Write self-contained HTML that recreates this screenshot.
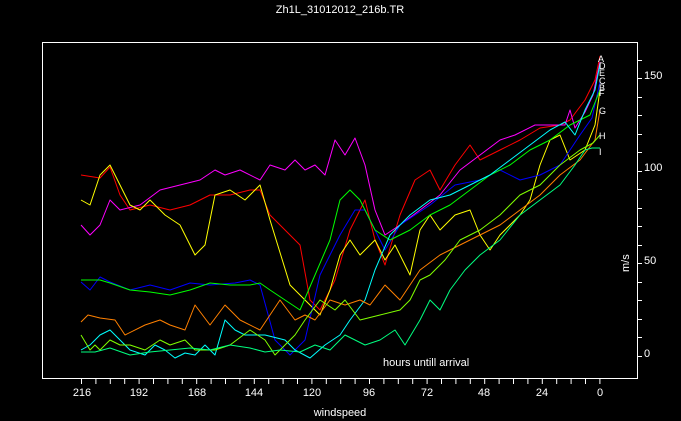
<!DOCTYPE html>
<html><head><meta charset="utf-8"><style>
html,body{margin:0;padding:0;background:#000;width:681px;height:421px;overflow:hidden}
svg{display:block}
text{font-family:"Liberation Sans",sans-serif;fill:#fff}
</style></head><body>
<svg width="681" height="421" viewBox="0 0 681 421" xmlns="http://www.w3.org/2000/svg">
<text x="340" y="13" font-size="11" text-anchor="middle">Zh1L_31012012_216b.TR</text>
<rect x="42.5" y="42.5" width="595" height="336" fill="none" stroke="#fff" stroke-width="1"/>
<g stroke="#fff" stroke-width="1">
<line x1="638" y1="60.5" x2="642" y2="60.5"/><line x1="638" y1="78.5" x2="642" y2="78.5"/><line x1="638" y1="97.5" x2="642" y2="97.5"/><line x1="638" y1="115.5" x2="642" y2="115.5"/><line x1="638" y1="134.5" x2="642" y2="134.5"/><line x1="638" y1="152.5" x2="642" y2="152.5"/><line x1="638" y1="171.5" x2="642" y2="171.5"/><line x1="638" y1="189.5" x2="642" y2="189.5"/><line x1="638" y1="208.5" x2="642" y2="208.5"/><line x1="638" y1="226.5" x2="642" y2="226.5"/><line x1="638" y1="245.5" x2="642" y2="245.5"/><line x1="638" y1="263.5" x2="642" y2="263.5"/><line x1="638" y1="282.5" x2="642" y2="282.5"/><line x1="638" y1="300.5" x2="642" y2="300.5"/><line x1="638" y1="319.5" x2="642" y2="319.5"/><line x1="638" y1="337.5" x2="642" y2="337.5"/><line x1="638" y1="356.5" x2="642" y2="356.5"/>
</g>
<g font-size="11">
<text x="644" y="79">150</text><text x="644" y="171">100</text><text x="644" y="264">50</text><text x="644" y="357">0</text>
</g>
<g stroke="#fff" stroke-width="1">
<line x1="81.5" y1="379" x2="81.5" y2="384"/><line x1="95.9" y1="379" x2="95.9" y2="384"/><line x1="110.3" y1="379" x2="110.3" y2="384"/><line x1="124.7" y1="379" x2="124.7" y2="384"/><line x1="139.1" y1="379" x2="139.1" y2="384"/><line x1="153.5" y1="379" x2="153.5" y2="384"/><line x1="167.9" y1="379" x2="167.9" y2="384"/><line x1="182.3" y1="379" x2="182.3" y2="384"/><line x1="196.7" y1="379" x2="196.7" y2="384"/><line x1="211.1" y1="379" x2="211.1" y2="384"/><line x1="225.5" y1="379" x2="225.5" y2="384"/><line x1="239.9" y1="379" x2="239.9" y2="384"/><line x1="254.3" y1="379" x2="254.3" y2="384"/><line x1="268.7" y1="379" x2="268.7" y2="384"/><line x1="283.1" y1="379" x2="283.1" y2="384"/><line x1="297.5" y1="379" x2="297.5" y2="384"/><line x1="311.9" y1="379" x2="311.9" y2="384"/><line x1="326.3" y1="379" x2="326.3" y2="384"/><line x1="340.7" y1="379" x2="340.7" y2="384"/><line x1="355.1" y1="379" x2="355.1" y2="384"/><line x1="369.5" y1="379" x2="369.5" y2="384"/><line x1="383.9" y1="379" x2="383.9" y2="384"/><line x1="398.3" y1="379" x2="398.3" y2="384"/><line x1="412.7" y1="379" x2="412.7" y2="384"/><line x1="427.1" y1="379" x2="427.1" y2="384"/><line x1="441.5" y1="379" x2="441.5" y2="384"/><line x1="455.9" y1="379" x2="455.9" y2="384"/><line x1="470.3" y1="379" x2="470.3" y2="384"/><line x1="484.7" y1="379" x2="484.7" y2="384"/><line x1="499.1" y1="379" x2="499.1" y2="384"/><line x1="513.5" y1="379" x2="513.5" y2="384"/><line x1="527.9" y1="379" x2="527.9" y2="384"/><line x1="542.3" y1="379" x2="542.3" y2="384"/><line x1="556.7" y1="379" x2="556.7" y2="384"/><line x1="571.1" y1="379" x2="571.1" y2="384"/><line x1="585.5" y1="379" x2="585.5" y2="384"/><line x1="599.9" y1="379" x2="599.9" y2="384"/>
</g>
<g font-size="11" text-anchor="middle">
<text x="82" y="396">216</text><text x="139" y="396">192</text><text x="197" y="396">168</text><text x="254" y="396">144</text><text x="312" y="396">120</text><text x="369" y="396">96</text><text x="427" y="396">72</text><text x="484" y="396">48</text><text x="542" y="396">24</text><text x="600" y="396">0</text>
</g>
<text x="340" y="416" font-size="11" text-anchor="middle">windspeed</text>
<text x="383" y="366" font-size="11">hours untill arrival</text>
<text transform="translate(629,272) rotate(-90)" font-size="11">m/s</text>
<g fill="none" stroke-width="1" stroke-linejoin="round">
<polyline stroke="#ff0000" points="81,175 100,178 110,167 120,195 130,210 150,205 170,210 190,205 210,195 230,195 250,190 260,190 270,215 285,230 300,245 310,300 320,310 335,280 350,230 365,200 375,240 385,265 400,215 415,180 430,170 440,190 455,165 470,145 480,160 500,150 520,140 540,128 560,125 570,120 585,100 595,80 600,56"/>
<polyline stroke="#ff00ff" points="81,225 90,235 100,225 110,200 120,210 140,205 160,190 180,185 200,180 215,170 225,175 240,170 260,180 270,165 285,170 295,160 305,170 315,165 325,175 335,140 345,155 355,138 365,165 375,210 385,235 400,225 420,210 440,195 460,170 480,155 500,140 515,135 535,125 555,125 565,125 570,110 575,128 585,112 593,95 600,62"/>
<polyline stroke="#ffff00" points="81,200 90,205 100,175 110,165 120,185 130,205 140,210 150,200 165,215 180,225 195,255 205,245 215,195 230,190 245,200 260,185 270,220 290,285 305,300 320,315 330,290 340,255 350,240 360,255 375,240 385,260 395,245 410,275 420,230 430,215 440,230 455,215 470,210 480,235 490,250 500,235 520,215 530,200 540,165 550,140 560,135 570,160 585,150 595,125 600,90"/>
<polyline stroke="#0000ff" points="81,282 90,290 100,277 110,282 130,290 150,285 170,290 190,283 210,285 235,283 250,280 260,285 275,340 290,355 305,340 320,275 340,235 355,210 365,210 375,230 385,250 400,225 430,205 455,185 480,180 500,170 520,180 540,175 560,165 580,135 592,118 600,82"/>
<polyline stroke="#00ff00" points="81,280 100,280 110,283 130,290 150,292 170,295 190,290 210,283 230,285 250,285 260,283 270,290 285,300 300,310 315,275 330,240 340,200 350,190 360,200 375,230 390,240 410,230 430,215 450,205 470,190 490,175 510,165 530,150 550,140 570,125 590,115 600,90"/>
<polyline stroke="#00ffff" points="81,350 90,345 100,335 110,330 120,340 130,350 145,355 155,345 165,350 175,358 185,353 195,355 205,345 215,355 225,320 235,330 245,335 265,335 285,340 295,350 310,358 325,345 340,335 350,320 365,300 375,270 390,235 410,215 430,200 450,195 470,185 490,175 510,160 530,145 550,130 565,122 575,135 585,110 595,90 600,64"/>
<polyline stroke="#ff8000" points="81,322 88,315 100,318 115,320 125,335 145,325 160,320 170,325 185,330 195,305 210,325 225,305 240,320 260,330 280,300 295,320 305,315 315,320 330,300 345,305 360,300 370,305 385,285 400,300 420,270 440,255 460,245 480,235 500,225 520,210 540,195 560,175 580,160 595,140 600,110"/>
<polyline stroke="#80ff00" points="81,335 90,350 95,345 100,350 110,340 120,345 130,345 145,350 160,340 170,345 185,340 195,350 215,350 230,345 250,330 265,340 275,355 285,345 295,335 305,320 320,300 335,310 345,300 360,320 380,315 400,310 410,300 420,280 430,275 445,260 460,240 480,230 500,215 520,195 540,185 560,165 580,150 593,143 600,135"/>
<polyline stroke="#00ff80" points="81,352 95,352 110,348 130,355 150,352 170,350 190,348 210,350 230,345 250,348 265,352 280,350 300,352 315,345 330,350 345,335 355,340 365,345 380,340 395,330 405,345 420,320 430,300 440,310 450,290 465,270 480,255 500,240 520,215 540,200 560,185 575,165 585,150 592,148 600,148"/>
</g>
<g font-size="9">
<text x="598" y="62" fill="#ff0000">A</text>
<text x="599" y="69" fill="#00ffff">D</text>
<text x="599" y="76" fill="#ff00ff">E</text>
<text x="599" y="84" fill="#0000ff">C</text>
<text x="599" y="91" fill="#00ff00">B</text>
<text x="599" y="96" fill="#ffff00">F</text>
<text x="599" y="114" fill="#ff8000">G</text>
<text x="599" y="139" fill="#80ff00">H</text>
<text x="599" y="155" fill="#00ff80">I</text>
</g>
</svg>
</body></html>
